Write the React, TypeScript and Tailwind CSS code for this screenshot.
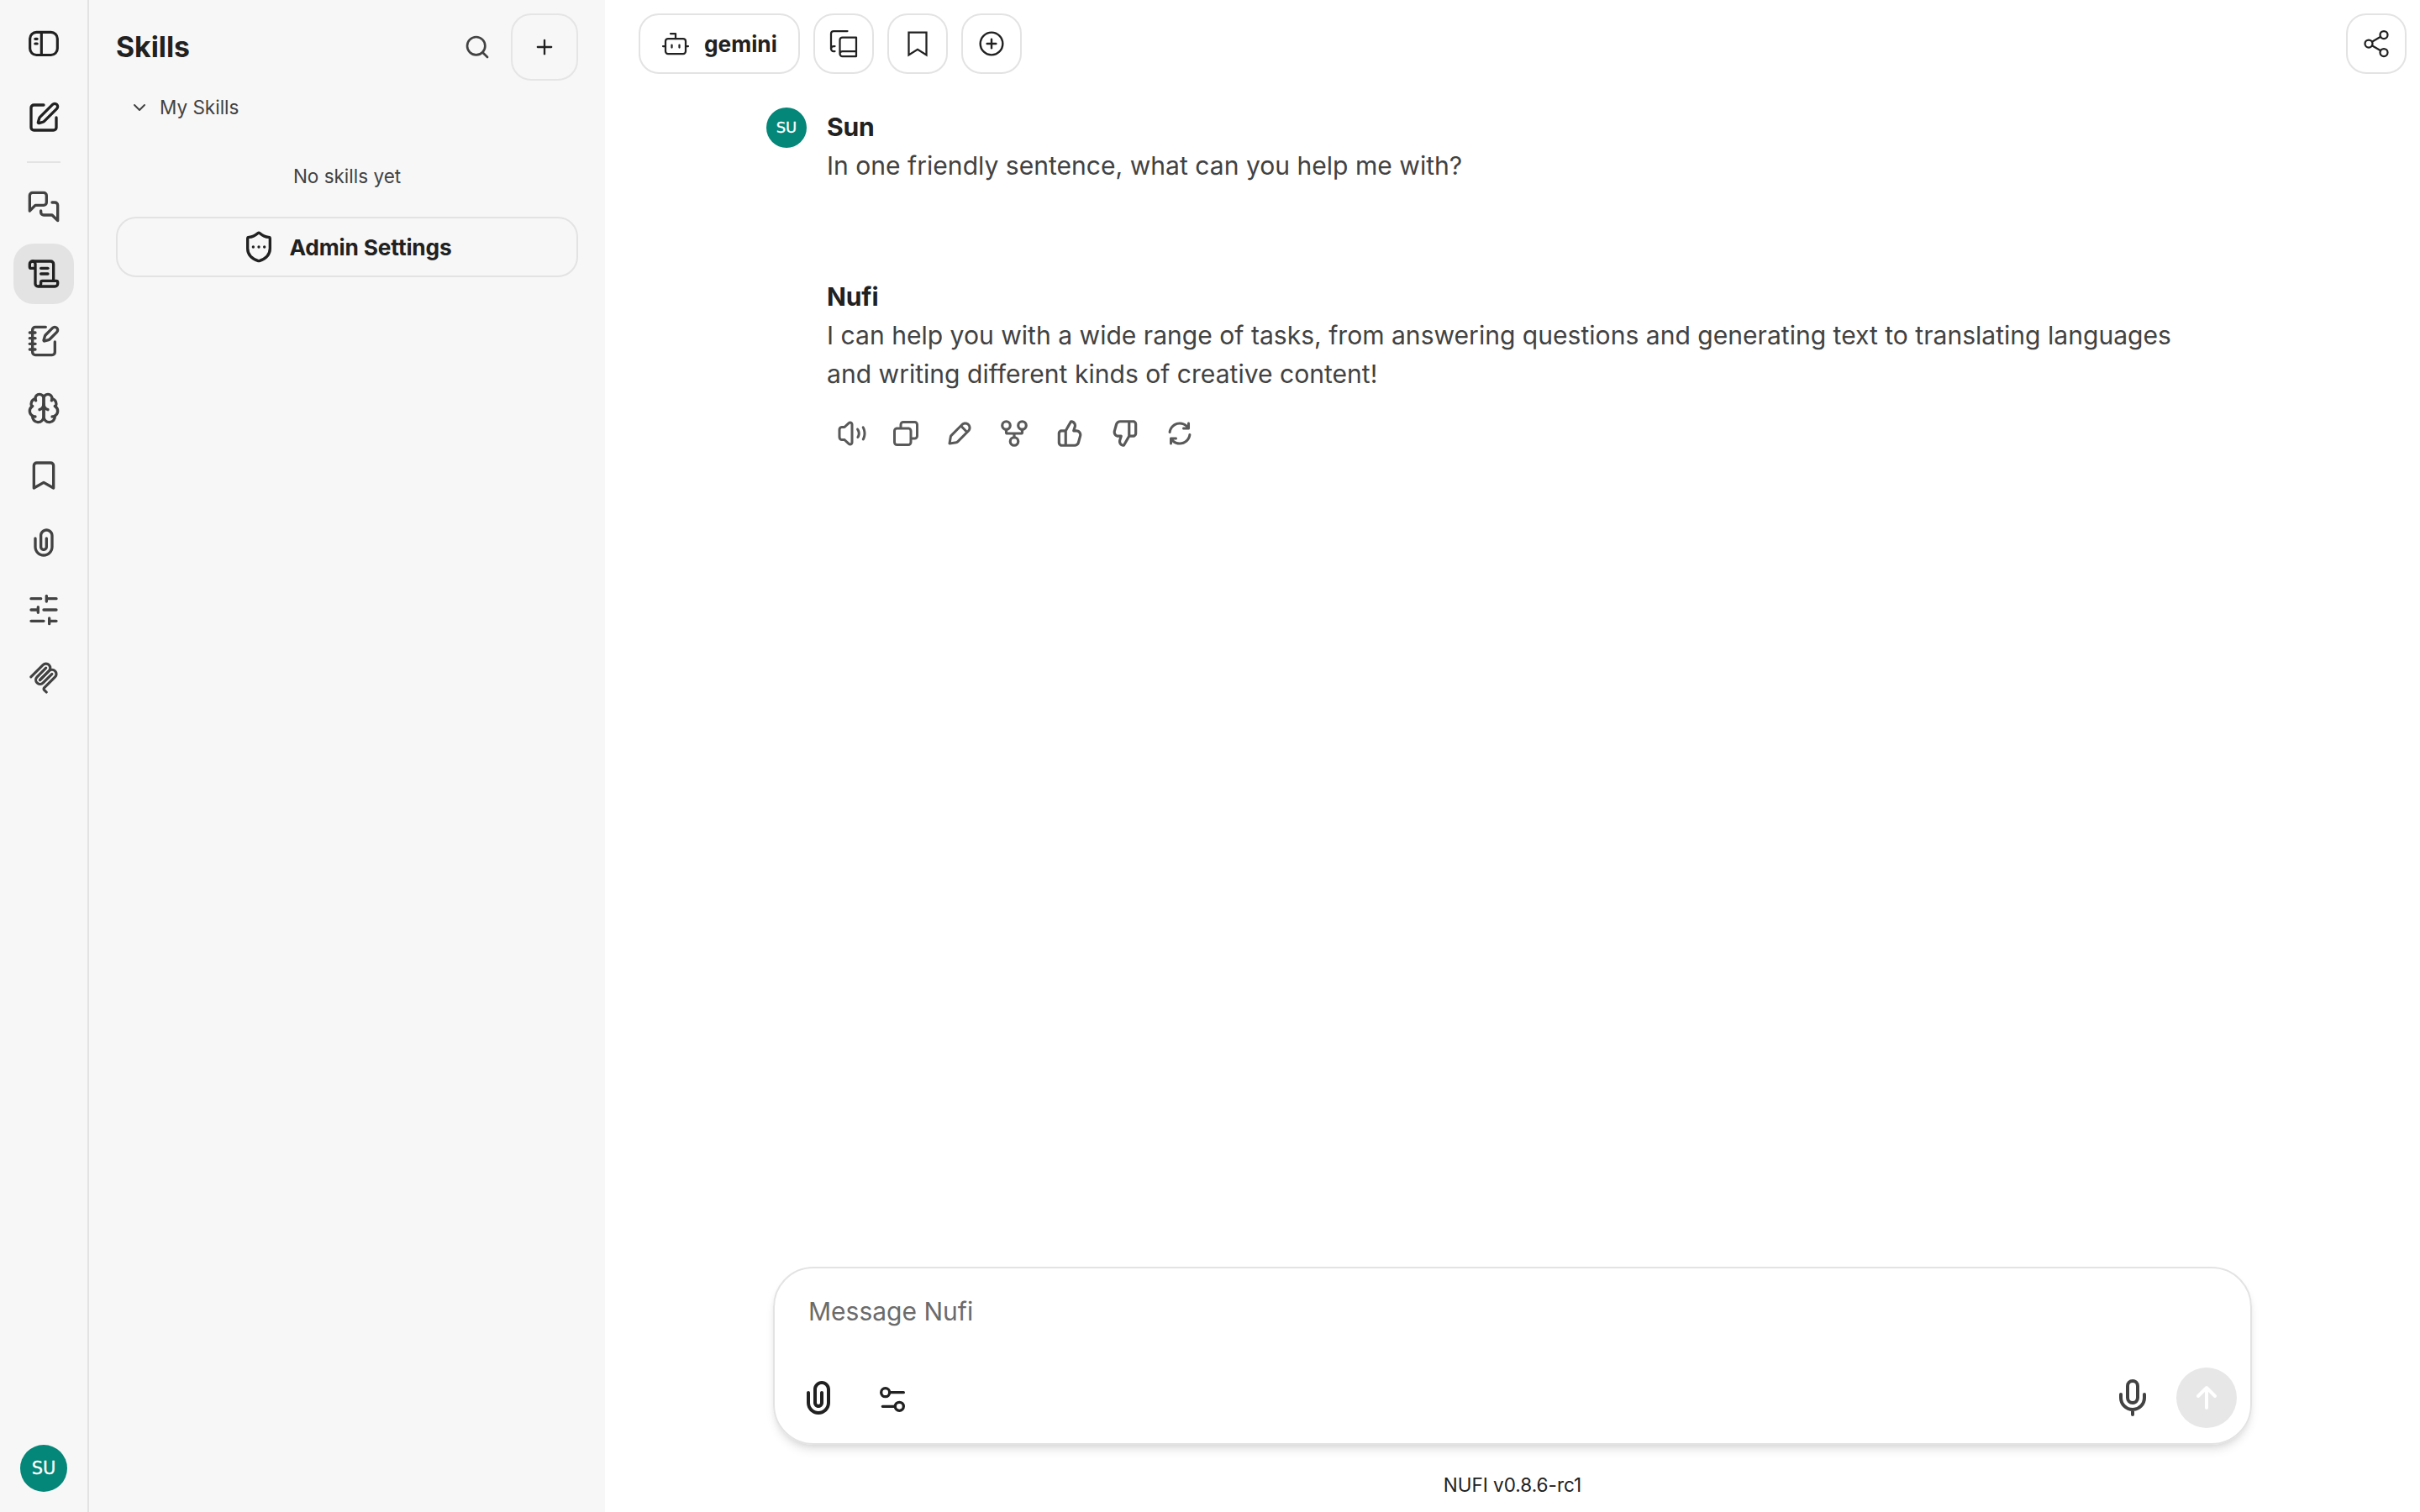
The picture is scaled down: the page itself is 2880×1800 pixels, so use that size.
import { ReactNode } from "react";
import { ChevronDown, CirclePlus, NotebookPen, Plus, ScrollText, Search, Share2, ShieldEllipsis, SquarePen } from "lucide-react";

type IconProps = {
  className?: string;
  strokeWidth?: number;
  children?: ReactNode;
};

function LineIcon({ className, strokeWidth = 2, children }: IconProps) {
  return (
    <svg
      viewBox="0 0 24 24"
      fill="none"
      stroke="currentColor"
      strokeWidth={strokeWidth}
      strokeLinecap="round"
      strokeLinejoin="round"
      className={className}
    >
      {children}
    </svg>
  );
}

function SolidIcon({ className, d }: { className?: string; d: string }) {
  return (
    <svg viewBox="0 0 24 24" fill="currentColor" className={className}>
      <path fillRule="evenodd" clipRule="evenodd" d={d} />
    </svg>
  );
}

const paths = {
  clip: "M9 7C9 4.23858 11.2386 2 14 2C16.7614 2 19 4.23858 19 7V15C19 18.866 15.866 22 12 22C8.13401 22 5 18.866 5 15V9C5 8.44772 5.44772 8 6 8C6.55228 8 7 8.44772 7 9V15C7 17.7614 9.23858 20 12 20C14.7614 20 17 17.7614 17 15V7C17 5.34315 15.6569 4 14 4C12.3431 4 11 5.34315 11 7V15C11 15.5523 11.4477 16 12 16C12.5523 16 13 15.5523 13 15V9C13 8.44772 13.4477 8 14 8C14.5523 8 15 8.44772 15 9V15C15 16.6569 13.6569 18 12 18C10.3431 18 9 16.6569 9 15V7Z",
  volume:
    "M11 4.9099C11 4.47485 10.4828 4.24734 10.1621 4.54132L6.67572 7.7372C6.49129 7.90626 6.25019 8.00005 6 8.00005H4C3.44772 8.00005 3 8.44776 3 9.00005V15C3 15.5523 3.44772 16 4 16H6C6.25019 16 6.49129 16.0938 6.67572 16.2629L10.1621 19.4588C10.4828 19.7527 11 19.5252 11 19.0902V4.9099ZM8.81069 3.06701C10.4142 1.59714 13 2.73463 13 4.9099V19.0902C13 21.2655 10.4142 22.403 8.81069 20.9331L5.61102 18H4C2.34315 18 1 16.6569 1 15V9.00005C1 7.34319 2.34315 6.00005 4 6.00005H5.61102L8.81069 3.06701ZM20.3166 6.35665C20.8019 6.09313 21.409 6.27296 21.6725 6.75833C22.5191 8.3176 22.9996 10.1042 22.9996 12.0001C22.9996 13.8507 22.5418 15.5974 21.7323 17.1302C21.4744 17.6185 20.8695 17.8054 20.3811 17.5475C19.8927 17.2896 19.7059 16.6846 19.9638 16.1962C20.6249 14.9444 20.9996 13.5175 20.9996 12.0001C20.9996 10.4458 20.6064 8.98627 19.9149 7.71262C19.6514 7.22726 19.8312 6.62017 20.3166 6.35665ZM15.7994 7.90049C16.241 7.5688 16.8679 7.65789 17.1995 8.09947C18.0156 9.18593 18.4996 10.5379 18.4996 12.0001C18.4996 13.3127 18.1094 14.5372 17.4385 15.5604C17.1357 16.0222 16.5158 16.1511 16.0539 15.8483C15.5921 15.5455 15.4632 14.9256 15.766 14.4637C16.2298 13.7565 16.4996 12.9113 16.4996 12.0001C16.4996 10.9859 16.1653 10.0526 15.6004 9.30063C15.2687 8.85905 15.3578 8.23218 15.7994 7.90049Z",
  copy: "M7 5C7 3.34315 8.34315 2 10 2H19C20.6569 2 22 3.34315 22 5V14C22 15.6569 20.6569 17 19 17H17V19C17 20.6569 15.6569 22 14 22H5C3.34315 22 2 20.6569 2 19V10C2 8.34315 3.34315 7 5 7H7V5ZM9 7H14C15.6569 7 17 8.34315 17 10V15H19C19.5523 15 20 14.5523 20 14V5C20 4.44772 19.5523 4 19 4H10C9.44772 4 9 4.44772 9 5V7ZM5 9C4.44772 9 4 9.44772 4 10V19C4 19.5523 4.44772 20 5 20H14C14.5523 20 15 19.5523 15 19V10C15 9.44772 14.5523 9 14 9H5Z",
  edit: "M13.2929 4.29291C15.0641 2.52167 17.9359 2.52167 19.7071 4.2929C21.4784 6.06414 21.4784 8.93588 19.7071 10.7071L18.7073 11.7069L11.1603 19.2539C10.7182 19.696 10.1489 19.989 9.53219 20.0918L4.1644 20.9864C3.84584 21.0395 3.52125 20.9355 3.29289 20.7071C3.06453 20.4788 2.96051 20.1542 3.0136 19.8356L3.90824 14.4678C4.01103 13.8511 4.30396 13.2818 4.7461 12.8397L13.2929 4.29291ZM13 7.41422L6.16031 14.2539C6.01293 14.4013 5.91529 14.591 5.88102 14.7966L5.21655 18.7835L9.20339 18.119C9.40898 18.0847 9.59872 17.9871 9.7461 17.8397L16.5858 11L13 7.41422ZM18 9.5858L14.4142 6.00001L14.7071 5.70712C15.6973 4.71693 17.3027 4.71693 18.2929 5.70712C19.2831 6.69731 19.2831 8.30272 18.2929 9.29291L18 9.5858Z",
  thumb:
    "M12.1318 2.50389C12.3321 2.15338 12.7235 1.95768 13.124 2.00775L13.5778 2.06447C16.0449 2.37286 17.636 4.83353 16.9048 7.20993L16.354 8.99999H17.0722C19.7097 8.99999 21.6253 11.5079 20.9313 14.0525L19.5677 19.0525C19.0931 20.7927 17.5124 22 15.7086 22H6C4.34315 22 3 20.6568 3 19V12C3 10.3431 4.34315 8.99999 6 8.99999H8.42L12.1318 2.50389ZM10 20H15.7086C16.6105 20 17.4008 19.3964 17.6381 18.5262L19.0018 13.5262C19.3488 12.2539 18.391 11 17.0722 11H15C14.6827 11 14.3841 10.8494 14.1956 10.5941C14.0071 10.3388 13.9509 10.0092 14.0442 9.70591L14.9932 6.62175C15.3384 5.49984 14.6484 4.34036 13.513 4.08468L10 10.2V20ZM8 11H6C5.44772 11 5 11.4477 5 12V19C5 19.5523 5.44772 20 6 20H8V11Z",
  regenerate:
    "M3.06957 10.8763C3.62331 6.43564 7.40967 3 12 3C14.2824 3 16.4028 3.85067 18.0118 5.25439V4C18.0118 3.44772 18.4595 3 19.0118 3C19.5641 3 20.0118 3.44772 20.0118 4V8C20.0118 8.55228 19.5641 9 19.0118 9H15C14.4477 9 14 8.55228 14 8C14 7.44772 14.4477 7 15 7H16.9571C15.6757 5.76379 13.9101 5 12 5C8.43108 5 5.48466 7.67174 5.0542 11.1237C4.98586 11.6718 4.48619 12.0607 3.93815 11.9923C3.39011 11.924 3.00123 11.4243 3.06957 10.8763ZM20.0618 12.0077C20.6099 12.076 20.9988 12.5757 20.9304 13.1237C20.3767 17.5644 16.5903 21 12 21C9.72322 21 7.60762 20.1535 5.99999 18.7559V20C5.99999 20.5523 5.55228 21 4.99999 21C4.44771 21 3.99999 20.5523 3.99999 20V16C3.99999 15.4477 4.44771 15 4.99999 15H8.99999C9.55228 15 9.99999 15.4477 9.99999 16C9.99999 16.5523 9.55228 17 8.99999 17H7.04285C8.32433 18.2362 10.0899 19 12 19C15.5689 19 18.5153 16.3283 18.9458 12.8763C19.0141 12.3282 19.5138 11.9393 20.0618 12.0077Z",
};

const navItems = [
  {
    name: "Chats",
    icon: (
      <LineIcon className="size-10">
        <path d="M14 9a2 2 0 0 1-2 2H6l-4 4V4a2 2 0 0 1 2-2h8a2 2 0 0 1 2 2z" />
        <path d="M18 9h2a2 2 0 0 1 2 2v11l-4-4h-6a2 2 0 0 1-2-2v-1" />
      </LineIcon>
    ),
  },
  { name: "Skills", active: true, icon: <ScrollText className="size-10" /> },
  { name: "Prompts", icon: <NotebookPen className="size-10" /> },
  {
    name: "Memories",
    icon: (
      <LineIcon className="size-10">
        <path d="M12 5a3 3 0 1 0-5.997.125 4 4 0 0 0-2.526 5.77 4 4 0 0 0 .556 6.588A4 4 0 1 0 12 18Z" />
        <path d="M12 5a3 3 0 1 1 5.997.125 4 4 0 0 1 2.526 5.77 4 4 0 0 1-.556 6.588A4 4 0 1 1 12 18Z" />
        <path d="M15 13a4.5 4.5 0 0 1-3-4 4.5 4.5 0 0 1-3 4" />
        <path d="M17.599 6.5a3 3 0 0 0 .399-1.375" />
        <path d="M6.003 5.125A3 3 0 0 0 6.401 6.5" />
        <path d="M3.477 10.896a4 4 0 0 1 .585-.396" />
        <path d="M19.938 10.5a4 4 0 0 1 .585.396" />
        <path d="M6 18a4 4 0 0 1-1.967-.516" />
        <path d="M19.967 17.484A4 4 0 0 1 18 18" />
      </LineIcon>
    ),
  },
  {
    name: "Bookmarks",
    icon: (
      <LineIcon className="size-10">
        <path d="m19 21-7-4-7 4V5a2 2 0 0 1 2-2h10a2 2 0 0 1 2 2v16z" />
      </LineIcon>
    ),
  },
  { name: "Files", icon: <SolidIcon className="size-10" d={paths.clip} /> },
  {
    name: "Parameters",
    icon: (
      <LineIcon className="size-10">
        <path d="M21 4h-7M10 4H3M21 12h-9M8 12H3M21 20h-5M12 20H3M14 2v4M8 10v4M16 18v4" />
      </LineIcon>
    ),
  },
  {
    name: "MCP",
    icon: (
      <svg
        viewBox="0 0 180 180"
        fill="none"
        stroke="currentColor"
        strokeWidth={15}
        strokeLinecap="round"
        className="mt-0.5 size-[38px]"
      >
        <path d="M18 84.8528L85.8822 16.9706C95.2548 7.59798 110.451 7.59798 119.823 16.9706C129.196 26.3431 129.196 41.5391 119.823 50.9117L68.5581 102.177" />
        <path d="M69.2652 101.47L119.823 50.9117C129.196 41.5391 144.392 41.5391 153.765 50.9117L154.118 51.2652C163.491 60.6378 163.491 75.8338 154.118 85.2063L92.7248 146.6C89.6006 149.724 89.6006 154.789 92.7248 157.913L105.331 170.52" />
        <path d="M102.853 33.9411L52.6482 84.1457C43.2756 93.5183 43.2756 108.714 52.6482 118.087C62.0208 127.459 77.2167 127.459 86.5893 118.087L136.794 67.8822" />
      </svg>
    ),
  },
];

const messageActions = [
  { name: "Read aloud", icon: <SolidIcon className="size-9" d={paths.volume} /> },
  { name: "Copy", icon: <SolidIcon className="size-9" d={paths.copy} /> },
  { name: "Edit", icon: <SolidIcon className="size-9" d={paths.edit} /> },
  {
    name: "Fork",
    icon: (
      <LineIcon className="size-[38px]">
        <circle cx="12" cy="18" r="3" />
        <circle cx="6" cy="6" r="3" />
        <circle cx="18" cy="6" r="3" />
        <path d="M18 9v2c0 .6-.4 1-1 1H7c-.6 0-1-.4-1-1V9M12 12v3" />
      </LineIcon>
    ),
  },
  { name: "Good", icon: <SolidIcon className="size-[38px]" d={paths.thumb} /> },
  { name: "Bad", icon: <SolidIcon className="size-[38px] rotate-180" d={paths.thumb} /> },
  { name: "Regenerate", icon: <SolidIcon className="size-9" d={paths.regenerate} /> },
];

function NavRail() {
  return (
    <nav className="flex w-[106px] flex-col items-center border-r-2 border-[#e3e3e3] py-4 pb-6">
      <button className="flex size-[72px] items-center justify-center">
        <LineIcon className="size-10" strokeWidth={1.9}>
          <rect x="2.2" y="3.8" width="19.6" height="16.3" rx="4.6" />
          <path d="M10.4 4v16M5.9 8.6h1.4M5.9 12h1.4" />
        </LineIcon>
      </button>
      <button className="mt-4 flex size-[72px] items-center justify-center">
        <SquarePen className="size-10" />
      </button>
      <div className="mt-4 h-0.5 w-10 bg-[#e3e3e3]" />
      <div className="mt-4 flex flex-1 flex-col gap-2 text-[#424242]">
        {navItems.map((item) => (
          <button
            key={item.name}
            aria-label={item.name}
            className={
              item.active
                ? "flex size-[72px] items-center justify-center rounded-3xl bg-[#e3e3e3] text-[#212121]"
                : "flex size-[72px] items-center justify-center rounded-3xl"
            }
          >
            {item.icon}
          </button>
        ))}
      </div>
      <div className="flex size-14 items-center justify-center rounded-full bg-[#048678] pt-px font-['DejaVu_Sans',sans-serif] text-[21px] text-white [-webkit-text-stroke:0.3px_white]">
        SU
      </div>
    </nav>
  );
}

function SkillsPanel() {
  return (
    <aside className="flex w-[614px] flex-col px-8 pt-4">
      <div className="flex h-20 items-center">
        <h2 className="flex-1 text-[33.75px] font-bold">Skills</h2>
        <button className="flex size-20 items-center justify-center text-[#424242]">
          <Search className="size-8" />
        </button>
        <button className="flex size-20 items-center justify-center rounded-3xl border-2 border-[#e5e5e5]">
          <Plus className="size-7" />
        </button>
      </div>
      <button className="mt-2 flex h-12 items-center gap-3 px-4 text-[22.5px] text-[#424242]">
        <ChevronDown className="size-6" />
        My Skills
      </button>
      <p className="mt-9 h-12 text-center text-[22.5px] leading-[44px] text-[#424242]">No skills yet</p>
      <button className="mt-[22px] flex h-[72px] items-center justify-center gap-4 rounded-3xl border-2 border-[#e3e3e3] text-[26.25px] font-bold tracking-[-0.005em]">
        <ShieldEllipsis className="size-10" />
        <span className="pt-px">Admin Settings</span>
      </button>
    </aside>
  );
}

function TopBar() {
  const square = "flex size-[72px] items-center justify-center rounded-3xl border-2 border-[#e3e3e3]";

  return (
    <header className="flex h-[104px] items-start gap-4 pt-4 pr-4 pl-10">
      <button className="flex h-[72px] w-48 items-center gap-4 rounded-3xl border-2 border-[#e3e3e3] pl-6 text-[26.25px] font-bold">
        <LineIcon className="size-9" strokeWidth={1.5}>
          <path d="M12 8V4H8" />
          <rect x="4" y="8" width="16" height="12" rx="2" />
          <path d="M2 14h2M20 14h2M15 13v2M9 13v2" />
        </LineIcon>
        <span className="pt-0.5">gemini</span>
      </button>
      <button className={square}>
        <LineIcon className="size-9" strokeWidth={1.5}>
          <path d="M2 16V4a2 2 0 0 1 2-2h11" />
          <path d="M22 18H11a2 2 0 1 0 0 4h11V7H11a2 2 0 0 0-2 2v11" />
          <path d="M5 14H4a2 2 0 1 0 0 4h1" />
        </LineIcon>
      </button>
      <button className={square}>
        <LineIcon className="size-9" strokeWidth={1.5}>
          <path strokeLinejoin="miter" d="M5 3h14v18l-7-4.5L5 21z" />
        </LineIcon>
      </button>
      <button className={square}>
        <CirclePlus className="size-8" strokeWidth={1.8} />
      </button>
      <div className="flex-1" />
      <button className={square}>
        <Share2 className="size-9" strokeWidth={1.5} />
      </button>
    </header>
  );
}

function Conversation() {
  return (
    <section className="flex-1 pt-6 pl-48 text-[30.08px] leading-[46px]">
      <div className="flex gap-6">
        <div className="flex size-12 items-center justify-center rounded-full bg-[#048678] font-['DejaVu_Sans',sans-serif] text-[18px] text-white [-webkit-text-stroke:0.3px_white]">
          SU
        </div>
        <div>
          <h3 className="font-bold tracking-[-0.005em]">Sun</h3>
          <p className="text-[#424242]">In one friendly sentence, what can you help me with?</p>
        </div>
      </div>
      <div className="mt-[110px] ml-[72px] w-[1640px]">
        <h3 className="font-bold tracking-[-0.005em]">Nufi</h3>
        <p className="text-[#424242]">
          I can help you with a wide range of tasks, from answering questions and generating text to translating
          languages and writing different kinds of creative content!
        </p>
        <div className="mt-[21px] flex items-center gap-1 text-[#595959]">
          {messageActions.map((action) => (
            <button key={action.name} aria-label={action.name} className="px-3 py-2">
              {action.icon}
            </button>
          ))}
        </div>
      </div>
    </section>
  );
}

function Composer() {
  return (
    <div className="mx-auto flex h-[212px] w-[1760px] flex-col justify-between rounded-[48px] border-2 border-[#e3e3e3] shadow-[0_8px_12px_-2px_rgba(0,0,0,0.1),0_4px_8px_-4px_rgba(0,0,0,0.1)]">
      <div className="px-10 pt-7 text-[30px] leading-[47px] text-[#6b6b6b]">Message Nufi</div>
      <div className="flex items-center pr-4 pb-[18px] pl-7">
        <SolidIcon className="size-12" d={paths.clip} />
        <LineIcon className="mt-1 ml-11 size-10">
          <path d="M20 7h-9M14 17H5" />
          <circle cx="17" cy="17" r="3" />
          <circle cx="7" cy="7" r="3" />
        </LineIcon>
        <div className="flex-1" />
        <LineIcon className="mr-7 size-12 text-[#424242]">
          <path d="M12 2a3 3 0 0 0-3 3v7a3 3 0 0 0 6 0V5a3 3 0 0 0-3-3Z" />
          <path d="M19 10v2a7 7 0 0 1-14 0v-2M12 19v3" />
        </LineIcon>
        <button className="flex size-[72px] items-center justify-center rounded-full bg-[#e7e7e7] text-white">
          <LineIcon className="size-12">
            <path d="M7 11L12 6L17 11M12 18V7" />
          </LineIcon>
        </button>
      </div>
    </div>
  );
}

export default function App() {
  return (
    <div className="flex h-[1800px] w-[2880px] bg-[#f7f7f7] font-[Inter,sans-serif] text-[#212121]">
      <NavRail />
      <SkillsPanel />
      <main className="flex flex-1 flex-col bg-white">
        <TopBar />
        <Conversation />
        <Composer />
        <footer className="flex h-20 items-center justify-center pt-4 text-[22.5px]">NUFI v0.8.6-rc1</footer>
      </main>
    </div>
  );
}
